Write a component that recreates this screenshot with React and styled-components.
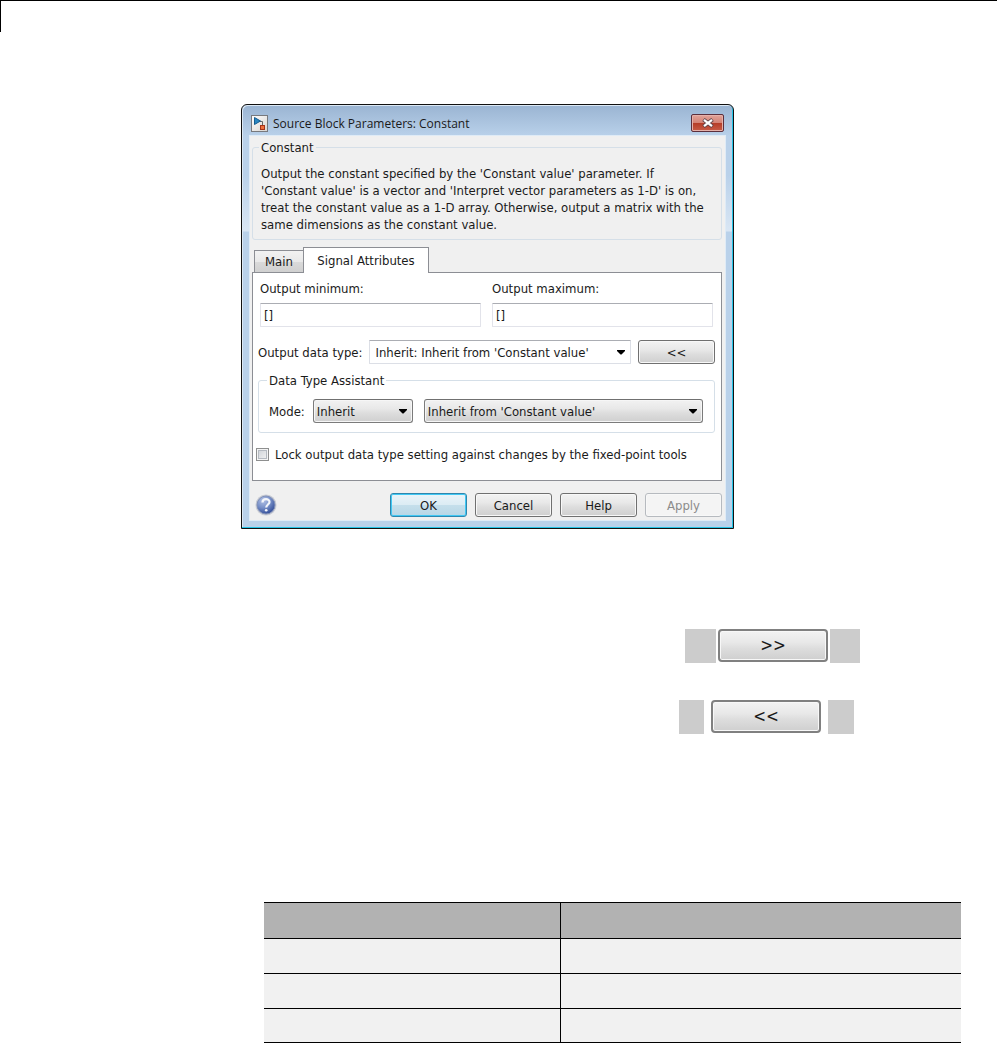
import { useState } from "react";
import styled, { createGlobalStyle } from "styled-components";

const rows = [1, 2, 3];

export default function App() {
  const [locked, setLocked] = useState(false);

  return (
    <>
      <GlobalStyle />
      <PageRule />
      <Dialog role="dialog" aria-labelledby="dialog-title">
        <TitleBar>
          <BlockIcon />
          <Title id="dialog-title">Source Block Parameters: Constant</Title>
          <CloseButton type="button" aria-label="Close">
            <CloseIcon />
          </CloseButton>
        </TitleBar>
        <Content>
          <Description>
            <legend>Constant</legend>
            <p>
              Output the constant specified by the 'Constant value' parameter. If
              <br />
              'Constant value' is a vector and 'Interpret vector parameters as 1-D' is on,
              <br />
              treat the constant value as a 1-D array. Otherwise, output a matrix with the
              <br />
              same dimensions as the constant value.
            </p>
          </Description>
          <Tabs role="tablist">
            <Tab type="button" role="tab" aria-selected={false}>
              Main
            </Tab>
            <Tab type="button" role="tab" aria-selected $active>
              Signal Attributes
            </Tab>
          </Tabs>
          <Panel role="tabpanel">
            <Limits>
              <Field>
                <label htmlFor="minimum">Output minimum:</label>
                <TextInput id="minimum" defaultValue="[]" />
              </Field>
              <Field>
                <label htmlFor="maximum">Output maximum:</label>
                <TextInput id="maximum" defaultValue="[]" />
              </Field>
            </Limits>
            <TypeRow>
              <label htmlFor="type">Output data type:</label>
              <Dropdown id="type" option="Inherit: Inherit from 'Constant value'" $plain />
              <Button type="button">&lt;&lt;</Button>
            </TypeRow>
            <Assistant>
              <legend>Data Type Assistant</legend>
              <ModeRow>
                <label htmlFor="mode">Mode:</label>
                <Dropdown id="mode" option="Inherit" />
                <Dropdown option="Inherit from 'Constant value'" aria-label="Inherit from" />
              </ModeRow>
            </Assistant>
            <LockRow>
              <Checkbox
                type="checkbox"
                id="lock"
                checked={locked}
                onChange={(e) => setLocked(e.target.checked)}
              />
              <label htmlFor="lock">
                Lock output data type setting against changes by the fixed-point tools
              </label>
            </LockRow>
          </Panel>
          <Footer>
            <HelpButton type="button" aria-label="About this block">
              <HelpIcon />
            </HelpButton>
            <Button type="button" $primary>
              OK
            </Button>
            <Button type="button">Cancel</Button>
            <Button type="button">Help</Button>
            <Button type="button" disabled>
              Apply
            </Button>
          </Footer>
        </Content>
      </Dialog>

      <ExpandRow>
        <Swatch $width={31} />
        <Button type="button" $large>
          &gt;&gt;
        </Button>
        <Swatch $width={30} />
      </ExpandRow>
      <CollapseRow>
        <Swatch $width={25} />
        <Button type="button" $large>
          &lt;&lt;
        </Button>
        <Swatch $width={26} />
      </CollapseRow>

      <Table>
        <thead>
          <tr>
            <th />
            <th />
          </tr>
        </thead>
        <tbody>
          {rows.map((row) => (
            <tr key={row}>
              <td />
              <td />
            </tr>
          ))}
        </tbody>
      </Table>
    </>
  );
}

function Dropdown({ option, $plain, ...props }) {
  return (
    <SelectBox>
      <Select $plain={$plain} {...props}>
        <option>{option}</option>
      </Select>
      <Arrow viewBox="0 0 8 5">
        <path d="M0 0h8v1L4.500 4.500h-1L0 1z" />
      </Arrow>
    </SelectBox>
  );
}

function BlockIcon() {
  return (
    <svg width="17" height="17" viewBox="0 0 17 17">
      <defs>
        <linearGradient id="block" x2="1" y2="1">
          <stop offset="0" stopColor="#fff" />
          <stop offset="1" stopColor="#d8d4cf" />
        </linearGradient>
      </defs>
      <rect x="0.5" y="0.5" width="16" height="16" fill="url(#block)" stroke="#77797d" />
      <path d="M8 6.500h3.500V10" fill="none" stroke="#666" />
      <path d="M3.500 2.500l6 3.500-6 3.500z" fill="#2a86c0" stroke="#155d91" />
      <rect x="9.500" y="10.500" width="4" height="4" fill="#f0703c" stroke="#a4341a" />
    </svg>
  );
}

function CloseIcon() {
  return (
    <svg width="14" height="12" viewBox="0 0 14 12">
      <path d="M2.500 2.500l9 7M11.500 2.500l-9 7" stroke="#5d4349" strokeWidth="4" />
      <path d="M3 2.900l8 6.200M11 2.900l-8 6.200" stroke="#fff" strokeWidth="2.300" />
    </svg>
  );
}

function HelpIcon() {
  return (
    <svg width="22" height="22" viewBox="0 0 22 22">
      <defs>
        <radialGradient id="ball" cx="0.35" cy="0.25" r="0.8">
          <stop offset="0" stopColor="#b3c2e6" />
          <stop offset="0.5" stopColor="#7890c8" />
          <stop offset="1" stopColor="#2f4a96" />
        </radialGradient>
      </defs>
      <circle cx="11" cy="11" r="10.500" fill="#c9ccd4" />
      <circle cx="11" cy="11" r="9" fill="url(#ball)" stroke="#8090b8" />
      <path
        d="M7.500 8.500C7.500 4 14.500 4.300 14.500 8c0 2.400-3.300 2.700-3.300 5.500"
        fill="none"
        stroke="#f4f6fb"
        strokeWidth="2.200"
      />
      <circle cx="11.200" cy="16.300" r="1.300" fill="#f4f6fb" />
    </svg>
  );
}

const GlobalStyle = createGlobalStyle`
  * {
    box-sizing: border-box;
  }

  body {
    margin: 0;
    background: #fff;
    color: #1a1a1a;
    font-family: "DejaVu Sans Condensed", Tahoma, sans-serif;
    font-size: 13px;
    line-height: 17px;
  }

  button, input, select {
    font: inherit;
    color: inherit;
    margin: 0;
  }
`;

const PageRule = styled.div`
  height: 32px;
  border-top: 1px solid #000;
  border-left: 1px solid #000;
`;

const Dialog = styled.section`
  max-width: 493px;
  margin: 72px 0 0 241px;
  padding: 0 7px 7px;
  border: 1px solid #111;
  border-radius: 6px 6px 0 0;
  box-shadow: inset -1px -1px #24c3e6, inset 1px 1px #dce9f5;
  background: linear-gradient(#9ab4d2, #b9d1ea 31px, #b9d1ea 70px, #d9e6f4 126px, #b9d1ea 127px);
`;

const TitleBar = styled.header`
  display: flex;
  align-items: center;
  gap: 5px;
  height: 30px;
  padding: 6px 2px 0;
`;

const Title = styled.h1`
  flex: 1;
  margin: 0;
  font-family: "Open Sans", "Segoe UI", sans-serif;
  font-size: 12px;
  font-weight: 400;
`;

const CloseButton = styled.button`
  display: flex;
  align-items: center;
  justify-content: center;
  width: 33px;
  height: 18px;
  padding: 0;
  border: 1px solid #5c2f3c;
  border-radius: 2px;
  background: linear-gradient(#e2a399, #d48376 48%, #b53c27 50%, #c95c47);
  box-shadow: inset 0 0 0 1px #e5b1aa;
`;

const Content = styled.div`
  padding: 3px 3px 3px 2px;
  border: 1px solid #dfebf6;
  background: #f0f0f0;
`;

const Group = styled.fieldset`
  min-width: 0;
  margin: 0;
  border: 1px solid #d5dfe8;
  border-radius: 3px;

  legend {
    margin-left: -2px;
    padding: 0 2px;
  }
`;

const Description = styled(Group)`
  padding: 9px 8px 6px;

  p {
    margin: 0;
    white-space: nowrap;
  }
`;

const Tabs = styled.div`
  display: flex;
  align-items: flex-end;
  margin-top: 7px;
  padding-left: 2px;
`;

const Tab = styled.button`
  height: ${(props) => (props.$active ? 26 : 22)}px;
  width: ${(props) => (props.$active ? 126 : 49)}px;
  margin-bottom: ${(props) => (props.$active ? -1 : 0)}px;
  padding: 0;
  border: 1px solid #8c8e94;
  border-bottom: 0;
  border-right-width: ${(props) => (props.$active ? 1 : 0)}px;
  background: ${(props) => (props.$active ? "#fff" : "linear-gradient(#f2f2f2, #e9e9e9 50%, #dadada 52%, #d0d0d0)")};
  z-index: ${(props) => (props.$active ? 1 : 0)};
`;

const Panel = styled.div`
  padding: 7px 6px 17px 5px;
  border: 1px solid #8c8e94;
  background: #fff;
`;

const Limits = styled.div`
  display: grid;
  grid-template-columns: 1fr 1fr;
  gap: 11px;
  padding: 0 2px;
`;

const Field = styled.div`
  display: flex;
  flex-direction: column;
  gap: 6px;
`;

const TextInput = styled.input`
  width: 100%;
  height: 24px;
  padding: 0 3px;
  border: 1px solid #e2e3ea;
  border-top-color: #abadb3;
  border-radius: 1px;
  background: #fff;
`;

const TypeRow = styled.div`
  display: grid;
  grid-template-columns: auto 1fr 77px;
  align-items: center;
  gap: 7px;
  margin-top: 13px;
`;

const SelectBox = styled.div`
  position: relative;
`;

const Select = styled.select`
  display: block;
  width: 100%;
  height: 24px;
  padding: 0 20px 0 ${(props) => (props.$plain ? 5 : 3)}px;
  appearance: none;
  border: 1px solid ${(props) => (props.$plain ? "#dcdfe6" : "#7b7b7b")};
  border-top-color: ${(props) => (props.$plain ? "#abadb3" : "#707070")};
  border-radius: ${(props) => (props.$plain ? 1 : 3)}px;
  background: ${(props) => (props.$plain ? "#fff" : "linear-gradient(#f2f2f2, #e8e8e8 40%, #dddddd 60%, #cfcfcf)")};
  box-shadow: ${(props) => (props.$plain ? "none" : "inset 0 0 0 1px #f6f6f6")};
`;

const Arrow = styled.svg`
  position: absolute;
  top: 10px;
  right: 6px;
  width: 8px;
  height: 5px;
  fill: #000;
  pointer-events: none;
`;

const Button = styled.button`
  width: ${(props) => (props.$large ? 110 : 77)}px;
  height: ${(props) => (props.$large ? 33 : 24)}px;
  padding: 0;
  font-size: ${(props) => (props.$large ? 17 : 13)}px;
  border: ${(props) => (props.$large ? 2 : 1)}px solid
    ${(props) => (props.$primary ? "#2f86ad" : props.$large ? "#808080" : "#707070")};
  border-radius: ${(props) => (props.$large ? 4 : 3)}px;
  background: ${(props) =>
    props.$primary
      ? "linear-gradient(#eaf4f9, #dcecf4 48%, #c5dfeb 50%, #b7d6e6)"
      : "linear-gradient(#f3f3f3, #e8e8e8 40%, #dddddd 60%, #cfcfcf)"};
  box-shadow: ${(props) => (props.$primary ? "inset 0 0 0 1px #40c8f4" : "inset 0 0 0 1px #f8f8f8")};

  &:disabled {
    border-color: #b6babf;
    background: #f4f4f4;
    color: #8b8b8b;
  }
`;

const Assistant = styled(Group)`
  margin-top: 8px;
  padding: 10px 11px 9px 10px;
`;

const ModeRow = styled.div`
  display: grid;
  grid-template-columns: auto 100px 1fr;
  align-items: center;
  gap: 11px;

  label {
    margin-right: -3px;
  }
`;

const LockRow = styled.div`
  display: flex;
  align-items: center;
  gap: 6px;
  margin: 13px 0 0 -2px;
  white-space: nowrap;
`;

const Checkbox = styled.input`
  width: 13px;
  height: 13px;
  appearance: none;
  border: 1px solid #8e8f8f;
  background: linear-gradient(135deg, #cbcfd5, #f6f6f6);
  box-shadow: inset 0 0 0 1px #f4f4f4, inset 0 0 0 2px #b5bac1;

  &:checked {
    background: #4b6a93;
  }
`;

const Footer = styled.footer`
  display: flex;
  align-items: center;
  gap: 8px;
  padding-top: 12px;
`;

const HelpButton = styled.button`
  display: flex;
  margin: 0 auto 0 3px;
  padding: 0;
  border: 0;
  background: none;
`;

const SnippetRow = styled.div`
  display: flex;
`;

const ExpandRow = styled(SnippetRow)`
  gap: 2px;
  margin: 100px 0 0 685px;
`;

const CollapseRow = styled(SnippetRow)`
  gap: 7px;
  margin: 37px 0 0 679px;
`;

const Swatch = styled.span`
  width: ${(props) => props.$width}px;
  height: 34px;
  background: #ccc;
`;

const Table = styled.table`
  width: calc(100% - 300px);
  margin: 168px 36px 0 264px;
  border-collapse: collapse;
  table-layout: fixed;

  th,
  td {
    height: 35px;
    padding: 0;
    border-top: 1px solid #000;
    border-bottom: 1px solid #000;
    background: #f1f1f1;
  }

  th {
    height: 36px;
    background: #b2b2b2;
  }

  tr:last-child td {
    height: 34px;
  }

  th:first-child {
    width: 296px;
  }

  th:first-child,
  td:first-child {
    border-right: 1px solid #000;
  }
`;
